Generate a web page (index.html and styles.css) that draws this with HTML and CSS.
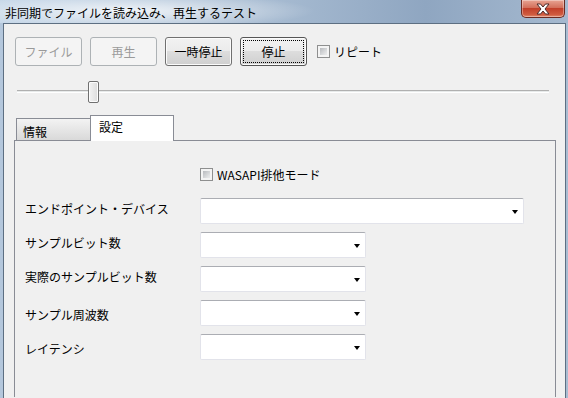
FILE: index.html
```html
<!DOCTYPE html>
<html lang="ja">
<head>
    <meta charset="UTF-8">
    <title>非同期でファイルを読み込み、再生するテスト</title>
    <link rel="stylesheet" href="styles.css">
</head>
<body>
    <div class="window">
        <div class="titlebar">
            <span class="title">非同期でファイルを読み込み、再生するテスト</span>
            <div class="close-btn">
                <svg width="16" height="12" viewBox="0 0 16 12">
                    <path d="M2 1 L5.5 1 L8 4 L10.5 1 L14 1 L10 6 L14 11 L10.5 11 L8 8 L5.5 11 L2 11 L6 6 Z"
                          fill="#fff" stroke="#4a2a2a" stroke-width="1" stroke-linejoin="round"/>
                </svg>
            </div>
        </div>
        <div class="frame">
            <div class="client">
                <div class="toolbar">
                    <button class="btn" disabled>ファイル</button>
                    <button class="btn" disabled>再生</button>
                    <button class="btn">一時停止</button>
                    <button class="btn btn-focus">停止</button>
                    <label class="check">
                        <span class="chk"></span>
                        <span>リピート</span>
                    </label>
                </div>

                <div class="slider">
                    <div class="track"></div>
                    <div class="thumb"></div>
                </div>

                <div class="tabs">
                    <div class="tab">情報</div>
                    <div class="tab tab-active">設定</div>
                </div>
                <div class="panel">
                    <label class="check check-wasapi">
                        <span class="chk"></span>
                        <span>WASAPI排他モード</span>
                    </label>

                    <div class="row">
                        <span class="lbl lbl-up">エンドポイント・デバイス</span>
                        <div class="combo combo-wide"><span class="arrow"></span></div>
                    </div>
                    <div class="row">
                        <span class="lbl lbl-up">サンプルビット数</span>
                        <div class="combo"><span class="arrow"></span></div>
                    </div>
                    <div class="row">
                        <span class="lbl lbl-up">実際のサンプルビット数</span>
                        <div class="combo"><span class="arrow"></span></div>
                    </div>
                    <div class="row">
                        <span class="lbl">サンプル周波数</span>
                        <div class="combo"><span class="arrow"></span></div>
                    </div>
                    <div class="row">
                        <span class="lbl">レイテンシ</span>
                        <div class="combo"><span class="arrow"></span></div>
                    </div>
                </div>
            </div>
        </div>
    </div>
</body>
</html>
```

FILE: styles.css
```css
body {
    margin: 0;
    width: 568px;
    height: 398px;
    overflow: hidden;
    font-family: "Noto Sans CJK JP", "Noto Sans", sans-serif;
    font-size: 12px;
    color: #000;
}
.window {
    display: flex;
    flex-direction: column;
    height: 398px;
    background: linear-gradient(to right, #b4c7dc, #9fb5cc 60%, #a9bdd2);
}
.titlebar {
    height: 23px;
    display: flex;
    align-items: flex-start;
    background:
        radial-gradient(ellipse 190px 18px at 125px 11px, rgba(255,255,255,0.8), rgba(255,255,255,0) 100%),
        linear-gradient(to right, #c3d5e7, #a9bdd3 45%, #8fa6c1 75%, #a5b9cf);
}
.title {
    margin: 4px 0 0 5px;
    line-height: 17px;
    white-space: nowrap;
}
.close-btn {
    margin-left: auto;
    margin-right: 3px;
    width: 44px;
    height: 18px;
    box-sizing: border-box;
    border: 1px solid #6b2b22;
    border-top: none;
    border-radius: 0 0 5px 5px;
    background: linear-gradient(#e8a493 0, #d3705b 45%, #c2402a 50%, #cf5a3e 85%, #e28a6e 100%);
    box-shadow: inset 0 0 0 1px rgba(255,255,255,0.35);
    display: flex;
    align-items: center;
    justify-content: center;
}
.frame {
    flex: 1;
    display: flex;
    padding: 0 2px 0 3px;
    min-height: 0;
}
.client {
    flex: 1;
    border: 1px solid #5d6f82;
    border-bottom: none;
    background: #f0f0f0;
    overflow: hidden;
}
.toolbar {
    display: flex;
    align-items: center;
    gap: 8px;
    padding: 13px 0 0 11px;
}
.btn {
    width: 67px;
    height: 29px;
    padding: 0;
    border: 1px solid #707070;
    border-radius: 3px;
    background: linear-gradient(#f2f2f2 0, #ebebeb 50%, #dddddd 50%, #cfcfcf 100%);
    box-shadow: inset 0 0 0 1px #fbfbfb;
    font: inherit;
    color: #000;
}
.btn:disabled {
    border-color: #adb2b5;
    background: #f4f4f4;
    box-shadow: none;
    color: #9a9a9a;
}
.btn-focus {
    border-color: #555;
    outline: 1px dotted #000;
    outline-offset: -4px;
}
.check {
    display: flex;
    align-items: center;
    gap: 4px;
    margin-left: 2px;
}
.chk {
    width: 11px;
    height: 11px;
    border: 1px solid #8e8f8f;
    background: linear-gradient(135deg, #a8abb0, #e4e5e6 70%, #f2f2f2);
    box-shadow: inset 0 0 0 2px #f4f4f4;
}
.slider {
    position: relative;
    height: 22px;
    margin: 15px 0 0 13px;
    width: 532px;
}
.track {
    position: absolute;
    left: 0;
    right: 0;
    top: 9px;
    height: 1px;
    border-top: 1px solid #b0b0b0;
    background: #e7eaea;
    border-bottom: 1px solid #fff;
}
.thumb {
    position: absolute;
    left: 71px;
    top: 0;
    width: 9px;
    height: 20px;
    border: 1px solid #707070;
    border-radius: 2px;
    background: linear-gradient(to right, #f3f3f3, #dcdcdc);
    box-shadow: inset 0 0 0 1px #fcfcfc;
}
.tabs {
    display: flex;
    align-items: flex-end;
    margin: 12px 0 0 12px;
    height: 25px;
}
.tab {
    width: 75px;
    height: 22px;
    box-sizing: border-box;
    border: 1px solid #898c95;
    border-bottom: none;
    padding: 4px 0 0 6px;
    line-height: 18px;
    background: linear-gradient(#f3f3f3, #d9d9d9);
}
.tab-active {
    width: 84px;
    height: 26px;
    margin: 0 0 -1px -1px;
    padding: 2px 0 0 8px;
    background: #fff;
    position: relative;
}
.panel {
    margin-left: 10px;
    width: 540px;
    height: 256px;
    border: 1px solid #898c95;
    border-bottom: none;
    background: #f0f0f0;
}
.check-wasapi {
    margin: 26px 0 0 185px;
    height: 14px;
}
.row {
    display: flex;
    align-items: flex-start;
    margin-top: 8px;
}
.check-wasapi + .row {
    margin-top: 17px;
}
.lbl {
    width: 175px;
    padding: 7px 0 0 10px;
    line-height: 16px;
    white-space: nowrap;
}
.lbl-up {
    padding-top: 3px;
}
.combo {
    position: relative;
    width: 166px;
    height: 26px;
    box-sizing: border-box;
    border: 1px solid #e2e3ea;
    border-top-color: #abadb3;
    border-radius: 2px;
    background: #fff;
}
.combo-wide {
    width: 324px;
}
.arrow {
    position: absolute;
    right: 5px;
    top: 11px;
    border-left: 3.5px solid transparent;
    border-right: 3.5px solid transparent;
    border-top: 4px solid #000;
}
```
